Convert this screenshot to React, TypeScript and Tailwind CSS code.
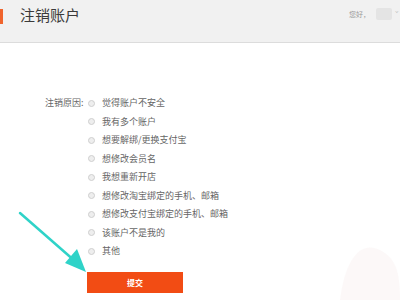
import React from "react";

const reasons = [
  "觉得账户不安全",
  "我有多个账户",
  "想要解绑/更换支付宝",
  "想修改会员名",
  "我想重新开店",
  "想修改淘宝绑定的手机、邮箱",
  "想修改支付宝绑定的手机、邮箱",
  "该账户不是我的",
  "其他",
];

export default function App() {
  return (
    <div
      className="relative w-[400px] h-[300px] overflow-hidden bg-white"
      style={{ fontFamily: '"Noto Sans CJK SC", "Noto Sans", sans-serif' }}
    >
      <div className="h-[43px] bg-[#f1f1f1] border-b border-[#dcdcdc] flex items-start">
        <div className="w-[3px] h-[15px] mt-[9px] bg-[#f0642d]" />
        <div className="ml-[17px] mt-[5px] text-[15px] leading-[20px] text-[#3a3a3a]">注销账户</div>
        <div className="ml-auto mt-[8px] flex items-center">
          <span className="text-[7px] leading-[10px] text-[#999]">您好，</span>
          <span className="ml-[6px] w-[16px] h-[12px] bg-[#e4e4e4] rounded-[2px]" />
          <span className="ml-[3px] w-[3px] text-[6px] leading-[6px] text-[#bbb]">ˇ</span>
          <span className="w-[2px]" />
        </div>
      </div>

      <div className="flex pl-[45px] pt-[54px]">
        <div className="text-[9px] leading-[12px] text-[#666] w-[43px]">注销原因:</div>
        <div className="flex flex-col gap-[6.5px]">
          {reasons.map((r) => (
            <div key={r} className="flex items-center h-[12px]">
              <span className="w-[7px] h-[7px] rounded-full border border-[#cfcfcf] bg-[#eeeeee]" />
              <span className="ml-[7px] text-[9px] leading-[12px] text-[#666]">{r}</span>
            </div>
          ))}
        </div>
      </div>

      <div className="pl-[87px] pt-[15px]">
        <div className="w-[96px] h-[21px] bg-[#f24c14] flex items-center justify-center text-white text-[8px] font-bold">
          提交
        </div>
      </div>

      <svg className="absolute left-0 top-0" width="400" height="300" viewBox="0 0 400 300">
        <line x1="20" y1="213" x2="76" y2="262" stroke="#2fd3c8" strokeWidth="2.5" strokeLinecap="round" />
        <polygon points="86,272 65,263 77,249" fill="#2fd3c8" />
        <path d="M340 300 C 345 260, 360 240, 380 250 C 395 258, 400 270, 400 300 Z" fill="#faf2f2" opacity="0.5" />
      </svg>
    </div>
  );
}
